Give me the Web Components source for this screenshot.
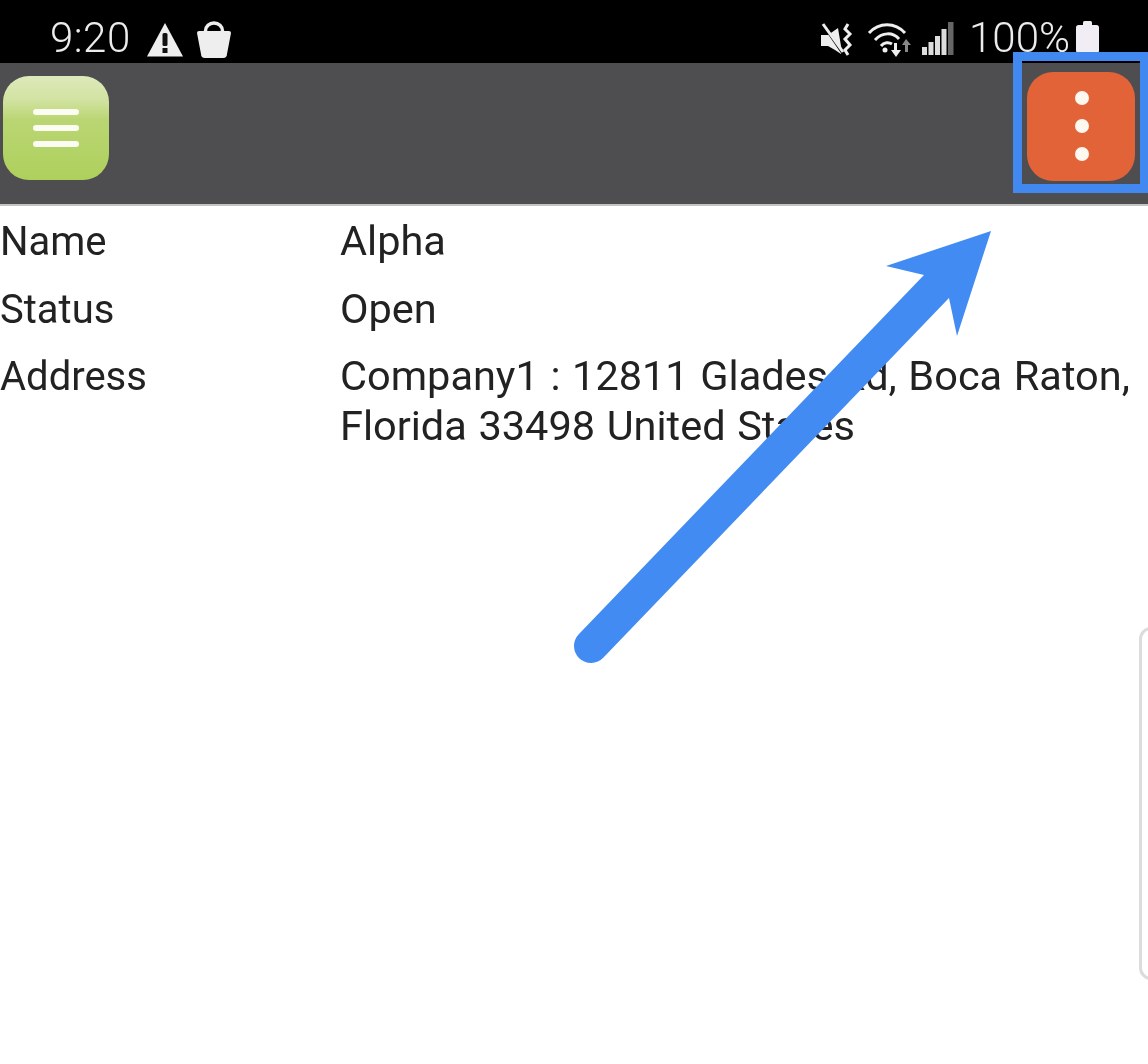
<!DOCTYPE html>
<html lang="en">
<head>
<meta charset="utf-8">
<title>Detail</title>
<style>
  html, body { margin: 0; height: 100%; background: #fff; overflow: hidden; }
  body { font-family: Roboto, "Liberation Sans", sans-serif; }
</style>
</head>
<body>
<app-screen>
  <status-bar></status-bar>
  <tool-bar></tool-bar>
  <detail-list>
    <detail-row label="Name">Alpha</detail-row>
    <detail-row label="Status">Open</detail-row>
    <detail-row label="Address">Company1 : 12811 Glades Rd, Boca Raton, Florida 33498 United States</detail-row>
  </detail-list>
  <side-tab></side-tab>
  <callout-arrow></callout-arrow>
</app-screen>

<script>
  class AppScreen extends HTMLElement {
    constructor() {
      super();
      this.attachShadow({ mode: 'open' });
    }
    connectedCallback() {
      this.shadowRoot.innerHTML = `
        <style>
          :host { display: block; position: relative; width: 1148px; height: 1064px; overflow: hidden; background: #fff; }
        </style>
        <slot></slot>
      `;
    }
  }

  class StatusBar extends HTMLElement {
    constructor() {
      super();
      this.attachShadow({ mode: 'open' });
    }
    connectedCallback() {
      this.shadowRoot.innerHTML = `
        <style>
          :host { display: flex; align-items: flex-start; height: 63px; box-sizing: border-box; padding-left: 50px; background: #000; color: #ececec; font-size: 42px; font-weight: 300; line-height: 46px; overflow: hidden; }
          .time { margin-top: 15px; letter-spacing: .5px; filter: blur(.4px); }
          svg { display: block; flex: none; filter: blur(.6px); }
          .warn { margin: 22px 0 0 15px; }
          .bag { margin: 21px 0 0 12px; }
          .spacer { flex: 1; }
          .mute { margin-top: 22px; }
          .wifi { margin: 22px 0 0 14px; }
          .signal { margin: 22px 0 0 9px; }
          .pct { margin: 15px 0 0 15px; filter: blur(.4px); }
          .batt { margin: 21px 48px 0 5px; }
        </style>
        <span class="time">9:20</span>
        <svg class="warn" width="38" height="36" viewBox="0 0 38 36">
          <path fill="#eee" d="M19 1 37 34.500H1Z"/>
          <rect x="16.500" y="11" width="5" height="13" rx="1.500" fill="#111"/>
          <rect x="16.500" y="26" width="5" height="5" fill="#111"/>
        </svg>
        <svg class="bag" width="36" height="38" viewBox="0 0 36 38">
          <path fill="none" stroke="#eee" stroke-width="3.500" d="M9.500 13V10a8.500 8 0 0 1 17 0v3"/>
          <path fill="#eee" d="M3 10H33a2 2 0 0 1 2 2L31 33a4 4 0 0 1-4 4H9a4 4 0 0 1-4-4L1 12a2 2 0 0 1 2-2Z"/>
        </svg>
        <span class="spacer"></span>
        <svg class="mute" width="33" height="36" viewBox="0 0 33 36">
          <path fill="#eee" d="M1 13H8L18 6 22 30 21 32 15 28 8 24H1Z"/>
          <path fill="none" stroke="#000" stroke-width="3" d="M2 1 24 33"/>
          <path fill="none" stroke="#eee" stroke-width="3" d="M3 2 23 30"/>
          <path fill="none" stroke="#eee" stroke-width="3" d="M28 2 25 7 30 12 25 17 30 23 25 28 28 33"/>
        </svg>
        <svg class="wifi" width="46" height="36" viewBox="0 0 46 36">
          <g fill="none" stroke="#eee" stroke-width="3">
            <path d="M2 11C12 0 28 0 38 11"/>
            <path d="M8 18C15 10 26 10 32 17"/>
            <path d="M14 24C17 20 22 20 25 22"/>
          </g>
          <circle cx="18" cy="28" r="2.500" fill="#eee"/>
          <path fill="#eee" d="M27 21h3v7h4l-5 7-5-7h3Z"/>
          <path fill="#888" d="M39 17l5 6h-3v7h-3v-7h-3Z"/>
        </svg>
        <svg class="signal" width="32" height="34" viewBox="0 0 32 34">
          <rect x="0" y="25" width="5" height="8" fill="#ddd"/>
          <rect x="6.500" y="20" width="5" height="13" fill="#ddd"/>
          <rect x="13" y="14" width="5" height="19" fill="#ddd"/>
          <rect x="19.500" y="7" width="5" height="26" fill="#ddd"/>
          <rect x="26" y="0" width="5.500" height="33" fill="#666"/>
        </svg>
        <span class="pct">100%</span>
        <svg class="batt" width="25" height="32" viewBox="0 0 25 32">
          <rect x="8" y="0" width="9" height="7" rx="1.500" fill="#f0eef4"/>
          <rect x="1" y="4" width="23" height="28" rx="2.500" fill="#f0eef4"/>
        </svg>
      `;
    }
  }

  class ToolBar extends HTMLElement {
    constructor() {
      super();
      this.attachShadow({ mode: 'open' });
    }
    connectedCallback() {
      this.shadowRoot.innerHTML = `
        <style>
          :host { display: flex; justify-content: space-between; align-items: flex-start; height: 143px; box-sizing: border-box; padding: 0 13px 0 3px; background: #4e4d4f; border-bottom: 2px solid #c4c4c4; }
          .menu { display: flex; flex-direction: column; justify-content: center; align-items: center; gap: 10px; width: 106px; height: 104px; margin-top: 13px; border-radius: 26px; background: linear-gradient(#dde9bb 0, #d3e3a3 22%, #bad673 42%, #aed05c 100%); }
          .menu i { display: block; width: 46px; height: 6px; border-radius: 3px; background: #fbfdf2; }
          .more { display: flex; flex-direction: column; justify-content: center; align-items: center; gap: 14px; width: 108px; height: 109px; box-sizing: border-box; padding-bottom: 2px; margin-top: 9px; border-radius: 26px; background: #e16337; }
          .more i { display: block; width: 14px; height: 14px; margin-left: 2px; border-radius: 50%; background: #fff8f0; }
          .frame { position: absolute; left: 1013px; top: 52px; width: 135px; height: 141px; box-sizing: border-box; border: 9px solid #4288f1; border-right-width: 8px; }
        </style>
        <div class="menu"><i></i><i></i><i></i></div>
        <div class="more"><i></i><i></i><i></i></div>
        <div class="frame"></div>
      `;
    }
  }

  class DetailList extends HTMLElement {
    constructor() {
      super();
      this.attachShadow({ mode: 'open' });
    }
    connectedCallback() {
      this.shadowRoot.innerHTML = `
        <style>
          :host { display: flex; flex-direction: column; gap: 16.500px; padding-top: 10px; font-size: 41.500px; line-height: 50px; word-spacing: 1.300px; color: #222; filter: blur(.4px); }
        </style>
        <slot></slot>
      `;
    }
  }

  class DetailRow extends HTMLElement {
    constructor() {
      super();
      this.attachShadow({ mode: 'open' });
    }
    connectedCallback() {
      this.shadowRoot.innerHTML = `
        <style>
          :host { display: grid; grid-template-columns: 340px 1fr; align-items: baseline; }
          .label { font-size: 40px; }
        </style>
        <span class="label">${this.getAttribute('label')}</span>
        <span><slot></slot></span>
      `;
    }
  }

  class SideTab extends HTMLElement {
    constructor() {
      super();
      this.attachShadow({ mode: 'open' });
    }
    connectedCallback() {
      this.shadowRoot.innerHTML = `
        <style>
          :host { display: block; position: absolute; left: 1139px; top: 627px; width: 30px; height: 353px; box-sizing: border-box; border: 3px solid #dcdcdc; border-radius: 12px; }
        </style>
      `;
    }
  }

  class CalloutArrow extends HTMLElement {
    constructor() {
      super();
      this.attachShadow({ mode: 'open' });
    }
    connectedCallback() {
      this.shadowRoot.innerHTML = `
        <style>
          :host { display: block; position: absolute; left: 0; top: 0; width: 1148px; height: 1064px; pointer-events: none; }
          svg { display: block; }
        </style>
        <svg width="1148" height="1064" viewBox="0 0 1148 1064">
          <path d="M591 646 936 287" stroke="#428bf3" stroke-width="34" stroke-linecap="round" fill="none"/>
          <path d="M991 231 886 266 924 275 949 298 957 336Z" fill="#428bf3"/>
        </svg>
      `;
    }
  }

  customElements.define('app-screen', AppScreen);
  customElements.define('status-bar', StatusBar);
  customElements.define('tool-bar', ToolBar);
  customElements.define('detail-list', DetailList);
  customElements.define('detail-row', DetailRow);
  customElements.define('side-tab', SideTab);
  customElements.define('callout-arrow', CalloutArrow);
</script>
</body>
</html>
